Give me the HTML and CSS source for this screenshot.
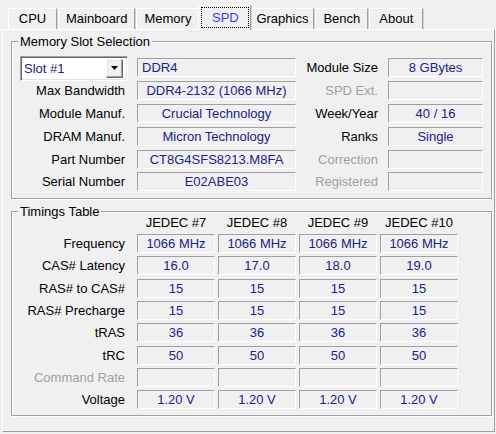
FILE: index.html
```html
<!DOCTYPE html>
<html>
<head>
<meta charset="utf-8">
<link rel="stylesheet" href="styles.css">
</head>
<body>
<div class="tabs">
  <div class="tab">CPU</div>
  <div class="tab">Mainboard</div>
  <div class="tab">Memory</div>
  <div class="tab active"><span class="focus">SPD</span></div>
  <div class="tab tab-narrow">Graphics</div>
  <div class="tab">Bench</div>
  <div class="tab tab-about">About</div>
</div>
<div class="panel">
  <div class="group">
    <div class="group-title">Memory Slot Selection</div>
    <div class="slot-grid">
      <div class="combo">
        <span class="combo-text">Slot #1</span>
        <span class="combo-btn"><svg width="7" height="4" viewBox="0 0 7 4"><path d="M0 0H7L3.5 4Z" fill="#000"/></svg></span>
      </div>
      <div class="field left">DDR4</div>
      <div class="label label-r">Module Size</div>
      <div class="field">8 GBytes</div>

      <div class="label">Max Bandwidth</div>
      <div class="field">DDR4-2132 (1066 MHz)</div>
      <div class="label label-r disabled">SPD Ext.</div>
      <div class="field"></div>

      <div class="label">Module Manuf.</div>
      <div class="field">Crucial Technology</div>
      <div class="label label-r">Week/Year</div>
      <div class="field">40 / 16</div>

      <div class="label">DRAM Manuf.</div>
      <div class="field">Micron Technology</div>
      <div class="label label-r">Ranks</div>
      <div class="field">Single</div>

      <div class="label">Part Number</div>
      <div class="field">CT8G4SFS8213.M8FA</div>
      <div class="label label-r disabled">Correction</div>
      <div class="field"></div>

      <div class="label">Serial Number</div>
      <div class="field">E02ABE03</div>
      <div class="label label-r disabled">Registered</div>
      <div class="field"></div>
    </div>
  </div>

  <div class="group group-timings">
    <div class="group-title">Timings Table</div>
    <div class="timing-grid">
      <div></div>
      <div class="head">JEDEC #7</div>
      <div class="head">JEDEC #8</div>
      <div class="head">JEDEC #9</div>
      <div class="head">JEDEC #10</div>

      <div class="tlabel">Frequency</div>
      <div class="field">1066 MHz</div>
      <div class="field">1066 MHz</div>
      <div class="field">1066 MHz</div>
      <div class="field">1066 MHz</div>

      <div class="tlabel">CAS# Latency</div>
      <div class="field">16.0</div>
      <div class="field">17.0</div>
      <div class="field">18.0</div>
      <div class="field">19.0</div>

      <div class="tlabel">RAS# to CAS#</div>
      <div class="field">15</div>
      <div class="field">15</div>
      <div class="field">15</div>
      <div class="field">15</div>

      <div class="tlabel">RAS# Precharge</div>
      <div class="field">15</div>
      <div class="field">15</div>
      <div class="field">15</div>
      <div class="field">15</div>

      <div class="tlabel">tRAS</div>
      <div class="field">36</div>
      <div class="field">36</div>
      <div class="field">36</div>
      <div class="field">36</div>

      <div class="tlabel">tRC</div>
      <div class="field">50</div>
      <div class="field">50</div>
      <div class="field">50</div>
      <div class="field">50</div>

      <div class="tlabel disabled">Command Rate</div>
      <div class="field"></div>
      <div class="field"></div>
      <div class="field"></div>
      <div class="field"></div>

      <div class="tlabel">Voltage</div>
      <div class="field">1.20 V</div>
      <div class="field">1.20 V</div>
      <div class="field">1.20 V</div>
      <div class="field">1.20 V</div>
    </div>
  </div>
</div>
</body>
</html>
```
FILE: styles.css
```css
html, body {
  margin: 0;
  padding: 0;
}
body {
  width: 496px;
  height: 434px;
  overflow: hidden;
  background: #f0f0f0;
  font: 13px "Liberation Sans", Arial, sans-serif;
  color: #000;
}

/* Tabs */
.tabs {
  display: flex;
  align-items: flex-end;
  height: 29px;
  box-sizing: border-box;
  padding-left: 8px;
}
.tab {
  height: 21px;
  box-sizing: border-box;
  min-width: 49px;
  padding: 0 7px;
  margin-right: 1px;
  text-align: center;
  line-height: 19px;
  border-top: 1px solid #fff;
  border-left: 1px solid #fff;
  border-right: 1px solid #a0a0a0;
  box-shadow: 1px 0 0 #d0d0d0;
  border-radius: 2px 2px 0 0;
  background: #f0f0f0;
  white-space: nowrap;
}
.tab-narrow {
  padding: 0 5px;
}
.tab-about {
  min-width: 54px;
}
.tab.active {
  height: 25px;
  min-width: 53px;
  padding: 0;
  margin: 0 -1px -1px -2px;
  position: relative;
  z-index: 1;
  color: #3c3cf2;
}
.focus {
  display: block;
  height: 21px;
  box-sizing: border-box;
  margin: 1px 1px 0 2px;
  padding: 0 9px;
  border: 1px dotted #000;
  line-height: 19px;
}

/* Panel */
.panel {
  height: 403px;
  box-sizing: border-box;
  margin: 0 1px 0 2px;
  border: 1px solid;
  border-color: #fff #a0a0a0 #a0a0a0 #fff;
}

.group {
  margin: 11px 2px 0 8px;
  border: 1px solid #a0a0a0;
  box-shadow: inset 1px 1px #fff, 1px 1px #fff;
}
.group-timings {
  margin-top: 12px;
}
.group-title {
  width: fit-content;
  height: 15px;
  line-height: 15px;
  margin: -8px 0 -7px 6px;
  padding: 0 2px;
  background: #f0f0f0;
  white-space: nowrap;
}

.slot-grid {
  display: grid;
  grid-template-columns: 125px 159px 92px 95px;
  grid-auto-rows: 22.8px;
  align-items: center;
  padding: 14.6px 0 5px;
}

.label {
  text-align: right;
  padding-right: 12px;
  white-space: nowrap;
}
.label-r {
  padding-right: 10px;
}
.disabled {
  color: #a0a0a0;
}

.field {
  height: 19px;
  box-sizing: border-box;
  border: 1px solid;
  border-color: #a0a0a0 #fff #fff #a0a0a0;
  line-height: 17px;
  text-align: center;
  color: #20208a;
  white-space: nowrap;
  overflow: hidden;
}
.field.left {
  text-align: left;
  padding-left: 4px;
}

/* Combobox */
.combo {
  width: 108px;
  height: 25px;
  margin-left: 8px;
  box-sizing: border-box;
  display: flex;
  align-items: center;
  background: #fff;
  border: 1px solid;
  border-color: #a0a0a0 #fff #fff #a0a0a0;
  box-shadow: inset 1px 1px #696969, inset -1px -1px #e3e3e3;
}
.combo-text {
  flex: 1;
  padding-left: 3px;
  color: #20208a;
}
.combo-btn {
  width: 17px;
  height: 19px;
  margin-right: 4px;
  box-sizing: border-box;
  display: flex;
  align-items: center;
  justify-content: center;
  background: #f0f0f0;
  border: 1px solid;
  border-color: #fff #696969 #696969 #fff;
  box-shadow: inset -1px -1px #a0a0a0, inset 1px 1px #e3e3e3;
}
.combo-btn svg {
  display: block;
}

/* Timings */
.timing-grid {
  display: grid;
  grid-template-columns: 122px repeat(4, 78px);
  column-gap: 3px;
  grid-template-rows: 20px;
  grid-auto-rows: 22.3px;
  align-items: center;
  padding: 0 0 4px;
}
.head {
  text-align: center;
  white-space: nowrap;
}
.tlabel {
  text-align: right;
  padding-right: 9px;
  white-space: nowrap;
}
```
